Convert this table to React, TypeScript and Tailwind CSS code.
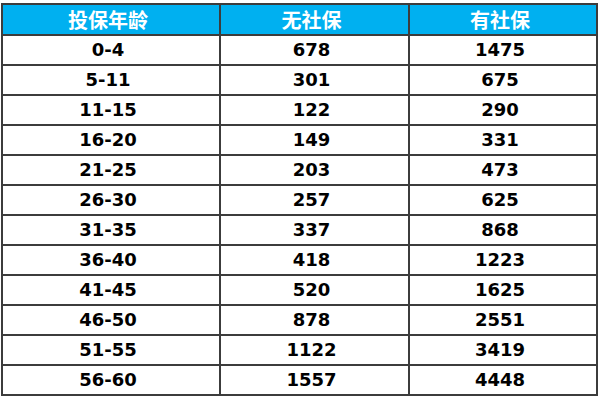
const rows: [string, string, string][] = [
  ['0-4', '678', '1475'],
  ['5-11', '301', '675'],
  ['11-15', '122', '290'],
  ['16-20', '149', '331'],
  ['21-25', '203', '473'],
  ['26-30', '257', '625'],
  ['31-35', '337', '868'],
  ['36-40', '418', '1223'],
  ['41-45', '520', '1625'],
  ['46-50', '878', '2551'],
  ['51-55', '1122', '3419'],
  ['56-60', '1557', '4448'],
];

export default function App() {
  return (
    <div className="w-[600px] h-[400px] bg-white pt-[3px] pl-[1px] overflow-hidden">
      <table className="border-collapse table-fixed w-[597px] [font-family:'DejaVu_Sans','Noto_Sans_CJK_SC',sans-serif]">
        <colgroup>
          <col className="w-[218px]" />
          <col className="w-[189px]" />
          <col className="w-[188px]" />
        </colgroup>
        <thead>
          <tr className="h-[31px] bg-[#00b0f0] text-white text-[20px] font-bold">
            {['投保年龄', '无社保', '有社保'].map((h) => (
              <th
                key={h}
                className="border-2 border-[#3c3c3c] p-0 pr-[6px] text-center align-middle leading-none [font-family:'Noto_Sans_CJK_SC',sans-serif]"
              >
                {h}
              </th>
            ))}
          </tr>
        </thead>
        <tbody>
          {rows.map((r) => (
            <tr key={r[0]} className="h-[30px] text-[18px] font-bold text-black">
              {r.map((c, i) => (
                <td
                  key={i}
                  className="border-2 border-[#3c3c3c] p-0 pr-[6px] text-center align-middle leading-none"
                >
                  {c}
                </td>
              ))}
            </tr>
          ))}
        </tbody>
      </table>
    </div>
  );
}
